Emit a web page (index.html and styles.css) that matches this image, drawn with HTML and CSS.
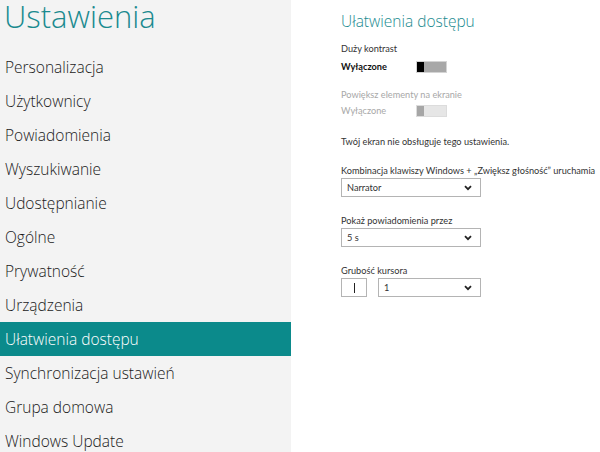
FILE: index.html
```html
<!DOCTYPE html>
<html lang="pl">
  <head>
    <meta charset="utf-8" />
    <title>Ustawienia</title>
    <link rel="stylesheet" href="styles.css">
  </head>
  <body>
    <div class="settings">
      <div class="nav">
        <h1 class="nav-title">Ustawienia</h1>
        <ul class="nav-list">
          <li>Personalizacja</li>
          <li>Użytkownicy</li>
          <li>Powiadomienia</li>
          <li>Wyszukiwanie</li>
          <li>Udostępnianie</li>
          <li>Ogólne</li>
          <li>Prywatność</li>
          <li>Urządzenia</li>
          <li class="active">Ułatwienia dostępu</li>
          <li>Synchronizacja ustawień</li>
          <li>Grupa domowa</li>
          <li>Windows Update</li>
        </ul>
      </div>

      <div class="content">
        <h2 class="content-title">Ułatwienia dostępu</h2>

        <div class="setting">
          <div class="setting-label">Duży kontrast</div>
          <div class="toggle-row">
            <span class="toggle-state">Wyłączone</span>
            <span class="toggle"><span class="toggle-thumb"></span></span>
          </div>
        </div>

        <div class="setting disabled">
          <div class="setting-label">Powiększ elementy na ekranie</div>
          <div class="toggle-row">
            <span class="toggle-state">Wyłączone</span>
            <span class="toggle"><span class="toggle-thumb"></span></span>
          </div>
        </div>

        <p class="setting note">Twój ekran nie obsługuje tego ustawienia.</p>

        <div class="setting choice">
          <div class="setting-label">Kombinacja klawiszy Windows + „Zwiększ głośność” uruchamia</div>
          <div class="select wide"><span>Narrator</span><svg width="8" height="6" viewBox="0 0 8 6"><path d="M1 1.2 L4 4.2 L7 1.2" fill="none" stroke="#222" stroke-width="1.8"/></svg></div>
        </div>

        <div class="setting choice">
          <div class="setting-label">Pokaż powiadomienia przez</div>
          <div class="select wide"><span>5 s</span><svg width="8" height="6" viewBox="0 0 8 6"><path d="M1 1.2 L4 4.2 L7 1.2" fill="none" stroke="#222" stroke-width="1.8"/></svg></div>
        </div>

        <div class="setting choice">
          <div class="setting-label">Grubość kursora</div>
          <div class="cursor-row">
            <div class="cursor-preview"><span class="caret"></span></div>
            <div class="select narrow"><span>1</span><svg width="8" height="6" viewBox="0 0 8 6"><path d="M1 1.2 L4 4.2 L7 1.2" fill="none" stroke="#222" stroke-width="1.8"/></svg></div>
          </div>
        </div>
      </div>
    </div>
  </body>
</html>
```

FILE: styles.css
```css
body, html {
  margin: 0;
  padding: 0;
  width: 100%;
  height: 100%;
  overflow: hidden;
}
body {
  font-family: "Open Sans", "Noto Sans", sans-serif;
  color: #222;
}
.settings {
  display: flex;
  height: 100%;
}
.nav {
  width: 291px;
  flex-shrink: 0;
  background: #f3f3f3;
  height: 100%;
}
.nav-title {
  margin: 0;
  padding: 0 0 0 4px;
  height: 50px;
  font-size: 31px;
  font-weight: 300;
  line-height: 32px;
  color: #1a8a8f;
}
.nav-list {
  list-style: none;
  margin: 0;
  padding: 0;
}
.nav-list li {
  height: 34px;
  line-height: 34px;
  padding-left: 5px;
  font-size: 15.5px;
  font-weight: 300;
  color: #1a1a1a;
  white-space: nowrap;
}
.nav-list li.active {
  background: #0b8a8b;
  color: #fff;
}
.content {
  padding: 10px 0 0 50px;
  flex: 1;
  min-width: 0;
  font-family: "Lato", "Open Sans", sans-serif;
  font-size: 9.2px;
  color: #333;
}
.content-title {
  margin: 0 0 10px 0;
  font-family: "Open Sans", sans-serif;
  font-size: 15.5px;
  font-weight: 300;
  color: #1a8a8f;
  line-height: 22px;
}
.setting {
  margin: 0 0 15px 0;
}
.setting.choice {
  margin-bottom: 17px;
}
.setting-label {
  line-height: 14px;
  white-space: nowrap;
}
.toggle-row {
  display: flex;
  align-items: center;
  height: 13px;
  margin-top: 4px;
}
.toggle-state {
  width: 75px;
  font-weight: 700;
  color: #111;
}
.toggle {
  display: flex;
  width: 29px;
  height: 10px;
  background: #a8a8a8;
  border: 1px solid #d4d4d4;
}
.toggle-thumb {
  width: 7px;
  height: 100%;
  background: #000;
}
.disabled {
  color: #a8a8a8;
  margin-bottom: 18px;
}
.disabled .toggle-row {
  margin-top: 2px;
}
.disabled .toggle-state {
  font-weight: 400;
  color: #a8a8a8;
}
.disabled .toggle {
  background: #e6e6e6;
  border-color: #dcdcdc;
}
.disabled .toggle-thumb {
  background: #a6a6a6;
}
.note {
  line-height: 14px;
  margin-bottom: 15px;
}
.select {
  display: flex;
  align-items: center;
  justify-content: space-between;
  height: 17px;
  border: 1px solid #b4b4b4;
  padding: 0 8px 0 5px;
  box-sizing: content-box;
}
.select.wide {
  width: 125px;
}
.select.narrow {
  width: 88px;
}
.cursor-row {
  display: flex;
  gap: 11px;
}
.cursor-preview {
  width: 24px;
  height: 17px;
  border: 1px solid #b4b4b4;
  display: flex;
  align-items: center;
  justify-content: center;
}
.caret {
  width: 1px;
  height: 10px;
  background: #222;
}
```
